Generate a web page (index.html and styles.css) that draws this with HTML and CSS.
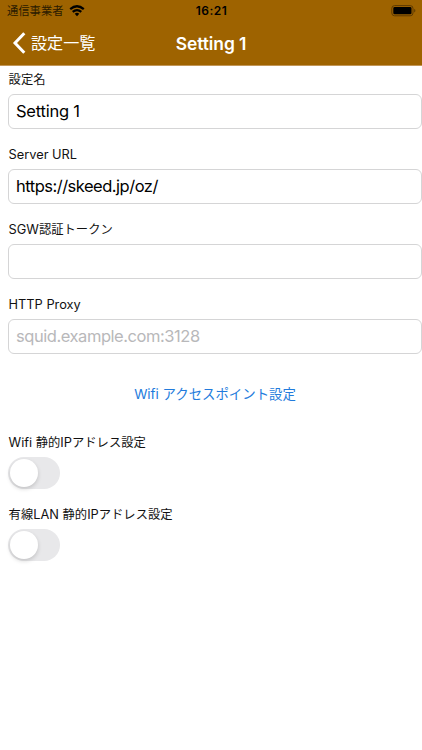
FILE: index.html
```html
<!DOCTYPE html>
<html lang="ja">
<head>
<meta charset="utf-8">
<title>Setting 1</title>
<link rel="stylesheet" href="styles.css">
</head>
<body>
<header class="header">
  <div class="status">
    <div class="status-left">
      <span class="carrier">通信事業者</span>
      <svg class="wifi" width="16" height="12" viewBox="0 0 16 12" fill="none" stroke="#000" stroke-width="2.2"><path d="M1.2 4.2Q8-1.7 14.8 4.2"/><path d="M3.7 6.9Q8 3.2 12.3 6.9"/><path d="M5.7 8.8Q8 6.8 10.3 8.8L8 11.3Z" fill="#000" stroke="none"/></svg>
    </div>
    <span class="clock">16:21</span>
    <svg class="battery" width="26" height="12" viewBox="0 0 26 12"><rect x="1.8" y=".6" width="21.2" height="10.2" rx="2.8" fill="none" stroke="#5e3a00"/><rect x="3.3" y="2.1" width="18.2" height="7.2" rx="1.3"/><path d="M24.2 4v3.4q1.2-.4 1.2-1.7t-1.2-1.7z" fill="#5e3a00"/></svg>
  </div>
  <nav class="nav">
    <a class="back"><svg width="14" height="22" viewBox="0 0 14 22" fill="none" stroke="#fff" stroke-width="3"><path d="M12.3 1.2L3 11L12.3 20.8"/></svg><span>設定一覧</span></a>
    <h1 class="title">Setting 1</h1>
    <span></span>
  </nav>
</header>
<main class="form">
  <div class="field"><label class="label"><span class="ja">設定名</span></label><div class="input">Setting 1</div></div>
  <div class="field"><label class="label">Server URL</label><div class="input url">https://skeed.jp/oz/</div></div>
  <div class="field"><label class="label">SGW<span class="ja">認証トークン</span></label><div class="input"></div></div>
  <div class="field"><label class="label">HTTP Proxy</label><div class="input placeholder">squid.example.com:3128</div></div>
  <a class="link">Wifi アクセスポイント設定</a>
  <div class="option"><span class="label">Wifi <span class="ja">静的</span>IP<span class="ja">アドレス設定</span></span><div class="switch"><i class="knob"></i></div></div>
  <div class="option"><span class="label"><span class="ja">有線</span>LAN <span class="ja">静的</span>IP<span class="ja">アドレス設定</span></span><div class="switch"><i class="knob"></i></div></div>
</main>
</body>
</html>
```
FILE: styles.css
```css
* { box-sizing: border-box; }
body {
  margin: 0;
  height: 750px;
  overflow: hidden;
  background: #fff;
  color: #111;
  font-family: Inter, "Noto Sans CJK JP", sans-serif;
}
.header {
  height: 66px;
  background: #9e6300;
  border-bottom: 1px solid #c29657;
}
.status, .nav {
  display: grid;
  grid-template-columns: 1fr auto 1fr;
  align-items: center;
}
.status { height: 21px; padding: 0 6px 0 7px; color: #000; }
.status-left { display: flex; align-items: center; gap: 5px; }
.carrier { font-size: 11.3px; line-height: 20px; color: #2b1b00; }
.clock { font-size: 12px; font-weight: 600; letter-spacing: .5px; }
.battery { justify-self: end; }
.nav { height: 44px; padding: 0 12px; color: #fff; }
.back { display: flex; align-items: center; gap: 5px; font-size: 16.1px; line-height: 22px; }
.title { margin: 0; font-size: 17.4px; font-weight: 600; letter-spacing: -.05px; }
.form { padding-left: 8px; }
.field { height: 75px; }
.label { display: block; height: 28px; padding-left: .6px; line-height: 28px; font-size: 12.8px; white-space: nowrap; }
.ja { font-size: 12.3px; }
.input {
  height: 35px;
  padding: 0 7px;
  border: 1px solid #d5d5d6;
  border-radius: 6px;
  line-height: 33px;
  font-size: 16.5px;
  letter-spacing: -.22px;
  color: #000;
}
.url { letter-spacing: -.5px; }
.placeholder { letter-spacing: -.45px; color: #b8b8ba; }
.link {
  display: block;
  height: 63px;
  padding: 17px 0 0;
  line-height: 22px;
  font-size: 13.4px;
  text-align: center;
  color: #227bdc;
}
.option { height: 72px; }
.switch { width: 52px; height: 32px; padding: 2px; border-radius: 16px; background: #e8e8ea; }
.knob { display: block; width: 28px; height: 28px; border-radius: 50%; background: #fff; box-shadow: 0 2px 4px rgba(0,0,0,.16); }
```
